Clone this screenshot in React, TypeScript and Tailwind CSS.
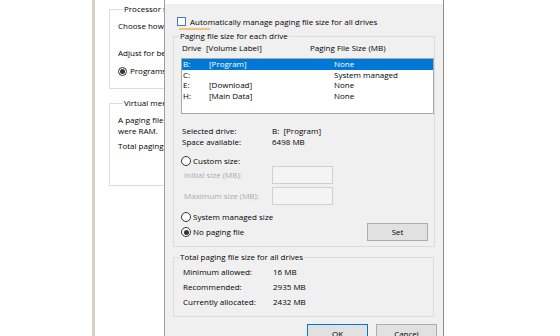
import type { FC, ReactNode } from 'react'

/** Радіо-кнопка у стилі Windows. */
const Radio: FC<{ checked?: boolean; size?: string }> = ({ checked, size = 'h-[10px] w-[10px]' }) => (
  <span className={`flex ${size} shrink-0 items-center justify-center rounded-full border border-[#333333] bg-white`}>
    {checked && <span className="h-[5px] w-[5px] rounded-full bg-[#333333]" />}
  </span>
)

/** Рамка групи з підписом на верхній лінії. */
const Group: FC<{ label: string; className?: string; children: ReactNode }> = ({ label, className = '', children }) => (
  <fieldset className={`border border-[#dcdcdc] ${className}`}>
    <legend className="ml-[5px] px-[1px] leading-[10px] whitespace-nowrap">{label}</legend>
    {children}
  </fieldset>
)

const drives = [
  { drive: 'B:', label: '[Program]', size: 'None', selected: true },
  { drive: 'C:', label: '', size: 'System managed' },
  { drive: 'E:', label: '[Download]', size: 'None' },
  { drive: 'H:', label: '[Main Data]', size: 'None' },
]

const totals = [
  ['Minimum allowed:', '16 MB'],
  ['Recommended:', '2935 MB'],
  ['Currently allocated:', '2432 MB'],
]

/** Вікно «Performance Options» за діалогом (видно лише ліву частину). */
const BackWindow: FC = () => (
  <div className="absolute left-[92px] top-0 h-full w-[72px] overflow-hidden border-l-[3px] border-[#d6cfc3] bg-white pl-[14px] pt-[3px]">
    <fieldset className="h-[86px] w-[130px] border border-[#dcdcdc] pl-[8px]">
      <legend className="ml-[5px] px-[1px] leading-[12px] whitespace-nowrap">Processor sch</legend>
      <div className="mt-[5px] h-[12px] leading-[12px] whitespace-nowrap">Choose how</div>
      <div className="mt-[15px] h-[12px] leading-[12px] whitespace-nowrap">Adjust for be</div>
      <div className="mt-[6px] flex h-[12px] items-center gap-[3px] whitespace-nowrap">
        <Radio checked size="h-[9px] w-[9px]" />
        <span>Programs</span>
      </div>
    </fieldset>
    <fieldset className="mt-[8px] h-[89px] w-[130px] border border-[#dcdcdc] pl-[8px]">
      <legend className="ml-[5px] px-[1px] leading-[12px] whitespace-nowrap">Virtual memo</legend>
      <div className="mt-[5px] leading-[11px] whitespace-nowrap">
        <div>A paging file</div>
        <div>were RAM.</div>
      </div>
      <div className="mt-[4px] h-[12px] leading-[12px] whitespace-nowrap">Total paging</div>
    </fieldset>
  </div>
)

/** Діалог «Virtual Memory». */
const VirtualMemoryDialog: FC = () => (
  <div className="absolute left-[164px] top-0 flex h-[350px] w-[280px] flex-col border-x border-l-[#a0a0a0] border-r-[#8c8c8c] bg-[#f0f0f0]">
    <div className="h-[4px] bg-white" />

    <div className="ml-[12px] mt-[12px] flex h-[11px] items-center gap-[4px] whitespace-nowrap">
      <span className="h-[9px] w-[9px] border border-[#3f7dc0] bg-white" />
      <span>Automatically manage paging file size for all drives</span>
    </div>
    <div className="ml-[14px] mt-[1px] h-[2px] w-[31px] bg-[#f3c27e]" />

    <Group label="Paging file size for each drive" className="ml-[8px] mt-[1px] h-[216px] w-[261px]">
      <div className="mt-[1px] grid h-[11px] grid-cols-[24px_104px_auto] pl-[8px] leading-[11px] whitespace-nowrap">
        <span>Drive</span>
        <span>[Volume Label]</span>
        <span>Paging File Size (MB)</span>
      </div>

      <ul className="ml-[7px] mt-[5px] h-[56px] w-[253px] border border-[#a8a8a8] bg-white">
        {drives.map((d) => (
          <li
            key={d.drive}
            className={`grid h-[10.67px] grid-cols-[26px_125px_auto] pl-[1px] leading-[10.67px] whitespace-nowrap ${
              d.selected ? 'bg-[#0078d7] text-white' : ''
            }`}
          >
            <span>{d.drive}</span>
            <span>{d.label}</span>
            <span>{d.size}</span>
          </li>
        ))}
      </ul>

      <div className="mt-[11px] grid grid-cols-[90px_auto] pl-[8px] leading-[11px] whitespace-pre">
        <span>Selected drive:</span>
        <span>B:  [Program]</span>
        <span>Space available:</span>
        <span>6498 MB</span>
      </div>

      <div className="ml-[7px] mt-[8px] flex h-[11px] items-center gap-[2px] whitespace-nowrap">
        <Radio />
        <span>Custom size:</span>
      </div>
      <div className="grid grid-cols-[88px_61px] gap-y-[3px] pl-[10px] text-[#ababab] whitespace-nowrap">
        <span className="flex h-[18px] items-center">Initial size (MB):</span>
        <span className="h-[18px] border border-[#d0d0d0] bg-[#f4f4f4]" />
        <span className="flex h-[18px] items-center">Maximum size (MB):</span>
        <span className="h-[18px] border border-[#d0d0d0] bg-[#f4f4f4]" />
      </div>

      <div className="ml-[7px] mt-[6px] flex h-[11px] items-center gap-[2px] whitespace-nowrap">
        <Radio />
        <span>System managed size</span>
      </div>
      <div className="ml-[7px] mr-[6px] mt-[1px] flex h-[18px] items-center gap-[2px] whitespace-nowrap">
        <Radio checked />
        <span>No paging file</span>
        <button
          type="button"
          className="ml-auto flex h-[18px] w-[61px] items-center justify-center border border-[#adadad] bg-[#e1e1e1]"
        >
          Set
        </button>
      </div>
    </Group>

    <Group label="Total paging file size for all drives" className="ml-[8px] mt-[5px] h-[65px] w-[261px]">
      <div className="mt-[2px] grid grid-cols-[90px_auto] pl-[9px] leading-[15px] whitespace-nowrap">
        {totals.map(([k, v]) => (
          <div key={k} className="contents">
            <span>{k}</span>
            <span>{v}</span>
          </div>
        ))}
      </div>
    </Group>

    <div className="mt-[7px] flex justify-end gap-[8px] pr-[6px]">
      <button type="button" className="flex h-[20px] w-[61px] items-center justify-center border border-[#0078d7] bg-[#e1e1e1]">
        OK
      </button>
      <button type="button" className="flex h-[20px] w-[61px] items-center justify-center border border-[#adadad] bg-[#e1e1e1]">
        Cancel
      </button>
    </div>
  </div>
)

export default function App() {
  return (
    <div className="relative h-[336px] w-[560px] overflow-hidden bg-white font-['Open_Sans',sans-serif] text-[8px] text-black">
      <BackWindow />
      <VirtualMemoryDialog />
    </div>
  )
}
